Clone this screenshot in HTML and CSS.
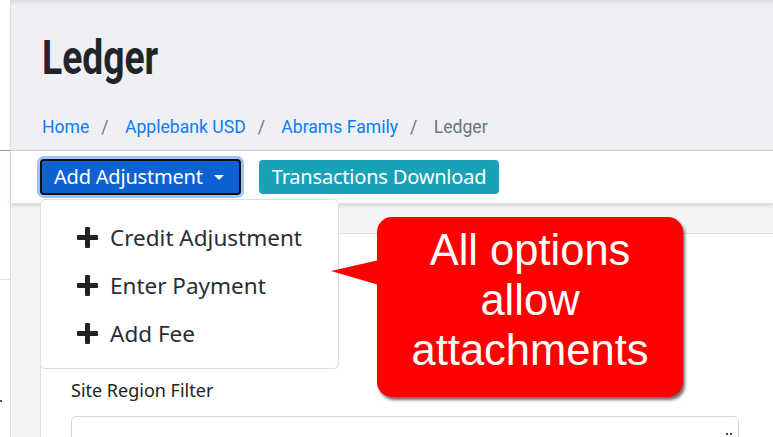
FILE: index.html
```html
<!doctype html>
<html lang="en">
<head>
<title>Ledger</title>
<meta name="viewport" content="width=device-width, initial-scale=1">
<link rel="stylesheet" href="styles.css">
</head>
<body>
<div class="app">
<aside class="sidebar">
<div class="side-row top"></div>
<div class="side-row"></div>
<div class="side-dot"></div>
</aside>
<main class="main">
<header class="page-head">
<h1><span>Ledger</span></h1>
<nav class="crumbs">
<a href="#">Home</a><span class="sep">/</span>
<a href="#">Applebank USD</a><span class="sep">/</span>
<a href="#">Abrams Family</a><span class="sep">/</span>
<span class="current">Ledger</span>
</nav>
</header>
<div class="toolbar">
<div class="dropdown">
<button class="btn btn-primary" type="button">Add Adjustment <span class="caret"></span></button>
<ul class="menu">
<li><span class="plus"></span>Credit Adjustment</li>
<li><span class="plus"></span>Enter Payment</li>
<li><span class="plus"></span>Add Fee</li>
</ul>
</div>
<button class="btn btn-info" type="button">Transactions Download</button>
</div>
<section class="content">
<div class="card">
<label class="field-label" for="region">Site Region Filter</label>
<div class="select" id="region"><span class="chev"></span></div>
</div>
<div class="callout">All options<br>allow<br>attachments</div>
</section>
</main>
</div>
</body>
</html>
```

FILE: styles.css
```css
* { box-sizing:border-box; margin:0; padding:0; }
html, body { height:100%; overflow:hidden; }
body { font-family:'Noto Sans', sans-serif; background:#f4f4f5; color:#212529; }
.app { display:flex; height:100%; }

.sidebar { width:11px; flex:none; background:#fff; border-right:1px solid #dcdcdf; }
.side-row { height:129px; border-bottom:1px solid #e2e2e2; }
.side-row.top { height:151px; border-bottom-color:#8f8f94; }
.side-dot { width:2px; height:2px; background:#555; margin-top:120px; }

.main { flex:1; display:flex; flex-direction:column; min-width:0; }

.page-head { flex:none; height:150px; background:#eef0f4; box-shadow:inset 0 5px 5px -3px #d4d5d9; padding:30px 0 0 31px; }
.page-head h1 { font-family:Roboto, sans-serif; font-weight:700; font-size:49px; line-height:56px; color:#212529; white-space:nowrap; }
.page-head h1 span { display:inline-block; transform:scaleX(.76); transform-origin:0 50%; }
.crumbs { margin-top:29px; font-family:Roboto, sans-serif; font-size:17.6px; line-height:24px; color:#6c757d; }
.crumbs a { color:#0b7cff; text-decoration:none; }
.crumbs .sep { padding:0 12px; }

.toolbar { flex:none; height:53px; background:#fff; border-top:1px solid #c9cacd; display:flex; align-items:center; gap:18px; padding:0 0 0 29px; box-shadow:0 3px 4px rgba(0,0,0,.12); position:relative; z-index:2; }
.btn { font-family:'Noto Sans', sans-serif; font-size:20px; letter-spacing:-.2px; color:#fff; border-radius:4px; line-height:26px; cursor:pointer; }
.btn-primary { background:#0d62d3; border:2px solid #111; padding:3px 15px 3px 12px; box-shadow:0 0 0 3px #9cc5f7; }
.btn-info { background:#17a2b8; border:0; padding:4px 13px; }
.caret { display:inline-block; width:0; height:0; border-left:5px solid transparent; border-right:5px solid transparent; border-top:5px solid #fff; vertical-align:4px; margin-left:6px; }

.dropdown { position:relative; }
.menu { position:absolute; left:0; top:40px; width:299px; list-style:none; background:#fff; border:1px solid #dedede; border-radius:5px; padding:13px 0 11px; z-index:3; }
.menu li { display:flex; align-items:center; height:48px; padding-left:36px; font-size:22.5px; color:#2b2d31; white-space:nowrap; }
.plus { flex:none; position:relative; width:21px; height:21px; margin-right:12px; }
.plus::before, .plus::after { content:''; position:absolute; background:#222; border-radius:1px; }
.plus::before { left:8px; top:0; width:5px; height:21px; }
.plus::after { left:0; top:8px; width:21px; height:5px; }

.content { flex:1; padding:30px 0 0 29px; position:relative; }
.card { height:100%; background:#fff; border:1px solid #dedede; border-right:0; border-radius:4px 0 0 0; padding:145px 34px 0 30px; }
.field-label { display:block; font-size:18px; line-height:22px; color:#222; }
.select { height:40px; margin-top:15px; border:1px solid #cfd4da; border-radius:5px; position:relative; }
.chev { position:absolute; right:6px; top:16px; width:6px; height:2px; border-left:2px solid #444; border-right:2px solid #444; }

.callout { position:absolute; left:366px; top:14px; width:306px; height:180px; background:#f00; color:#fff; border-radius:15px; font-family:'Liberation Sans', Arial, sans-serif; font-size:43.5px; line-height:50px; text-align:center; padding-top:8px; box-shadow:2px 3px 3px rgba(60,60,60,.75); z-index:4; }
.callout::before { content:''; position:absolute; left:-46px; top:43px; border-right:48px solid #f00; border-top:11px solid transparent; border-bottom:14px solid transparent; }
```
